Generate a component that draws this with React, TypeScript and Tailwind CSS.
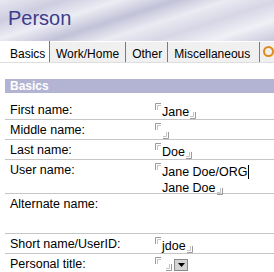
import React from "react";

// Notes-style field delimiters: the little grey corners around an editable value.
function CornerOpen() {
  return (
    <svg width="6" height="7" viewBox="0 0 6 7" className="shrink-0">
      <path d="M0.5 7V0.5H6" fill="none" stroke="#9a9a9a" />
      <path d="M2.5 7V2.5H6" fill="none" stroke="#c4c4c4" />
    </svg>
  );
}

function CornerClose() {
  return (
    <svg width="6" height="7" viewBox="0 0 6 7" className="shrink-0">
      <path d="M0 6.5H5.5V0" fill="none" stroke="#9a9a9a" />
      <path d="M0 4.5H3.5V0" fill="none" stroke="#c4c4c4" />
    </svg>
  );
}

function Row({
  label,
  h,
  children,
  last,
}: {
  label: string;
  h: string;
  children?: React.ReactNode;
  last?: boolean;
}) {
  return (
    <div className={`flex ${h} ${last ? "" : "border-b border-[#c6c6c6]"}`}>
      <div className="w-[145px] shrink-0 pl-[5px] pt-[2px] leading-[16px]">{label}</div>
      <div className="flex-1 pl-[5px] pt-[3px]">{children}</div>
    </div>
  );
}

function Field({ value }: { value: string }) {
  return (
    <div className="flex items-start">
      <CornerOpen />
      <span className="mt-[1px] ml-[1px] leading-[16px] text-[#000]">{value}</span>
      <span className="mt-[9px] ml-[1px]">
        <CornerClose />
      </span>
    </div>
  );
}

const tabs = [
  { name: "Work/Home", w: "w-[78px]" },
  { name: "Other", w: "w-[43px]" },
  { name: "Miscellaneous", w: "w-[94px]" },
];

export default function App() {
  return (
    <div className="h-[272px] w-[274px] overflow-hidden bg-white font-['Liberation_Sans',Arial,sans-serif] text-[12.5px] text-black">
      {/* cabeçalho com o degradê lilás */}
      <div className="h-[41px] bg-[linear-gradient(162deg,#e9e9f2_0%,#cdcde0_16%,#ededf5_30%,#c2c2d8_44%,#ebebf3_57%,#d6d6e6_70%,#f0f0f6_84%,#c8c8dc_100%)] pl-[8px] pt-[5px]">
        <span className="text-[20px] leading-[26px] text-[#3c3c8c]">Person</span>
      </div>

      {/* abas */}
      <div className="flex h-[22px] border-b border-[#dedede] text-[12px]">
        <div className="w-[51px] border-r border-[#7a7a7a] bg-white pl-[10px] pt-[4px]">Basics</div>
        {tabs.map((t) => (
          <div
            key={t.name}
            className={`${t.w} mt-[1px] border-r border-[#7a7a7a] bg-[#f0f0f0] pl-[6px] pt-[3px]`}
          >
            {t.name}
          </div>
        ))}
        <div className="mt-[1px] flex-1 bg-[#f0f0f0] pl-[3px] pt-[4px]">
          <div className="h-[11px] w-[11px] shrink-0 rounded-full border-2 border-[#e08a1a]" />
        </div>
      </div>

      <div className="ml-[5px] mt-[16px]">
        <div className="h-[14px] bg-[#b3b3d3] pl-[5px] text-[12px] font-bold leading-[14px] text-white">
          Basics
        </div>
        <div className="mt-[7px]">
          <Row label="First name:" h="h-[20px]">
            <Field value="Jane" />
          </Row>
          <Row label="Middle name:" h="h-[20px]">
            <Field value="" />
          </Row>
          <Row label="Last name:" h="h-[20px]">
            <Field value="Doe" />
          </Row>
          <Row label="User name:" h="h-[34px]">
            <div className="flex items-start">
              <CornerOpen />
              <div className="mt-[1px] ml-[1px] leading-[16px]">
                <div className="flex items-center">
                  Jane Doe/ORG
                  <span className="ml-[1px] h-[14px] w-[1px] bg-black" />
                </div>
                <div className="flex items-end">
                  Jane Doe
                  <span className="mb-[1px] ml-[1px]">
                    <CornerClose />
                  </span>
                </div>
              </div>
            </div>
          </Row>
          <Row label="Alternate name:" h="h-[40px]" />
          <Row label="Short name/UserID:" h="h-[20px]">
            <Field value="jdoe" />
          </Row>
          <Row label="Personal title:" h="h-[20px]" last>
            <div className="flex items-start">
              <CornerOpen />
              <span className="mt-[7px] ml-[5px]">
                <CornerClose />
              </span>
              <div className="ml-[2px] mt-[2px] flex h-[12px] w-[14px] items-center justify-center border border-[#8a8a8a] bg-[#d4d4d4]">
                <svg width="7" height="4" viewBox="0 0 7 4">
                  <path d="M0 0H7L3.5 4Z" fill="#000" />
                </svg>
              </div>
            </div>
          </Row>
        </div>
      </div>
    </div>
  );
}
